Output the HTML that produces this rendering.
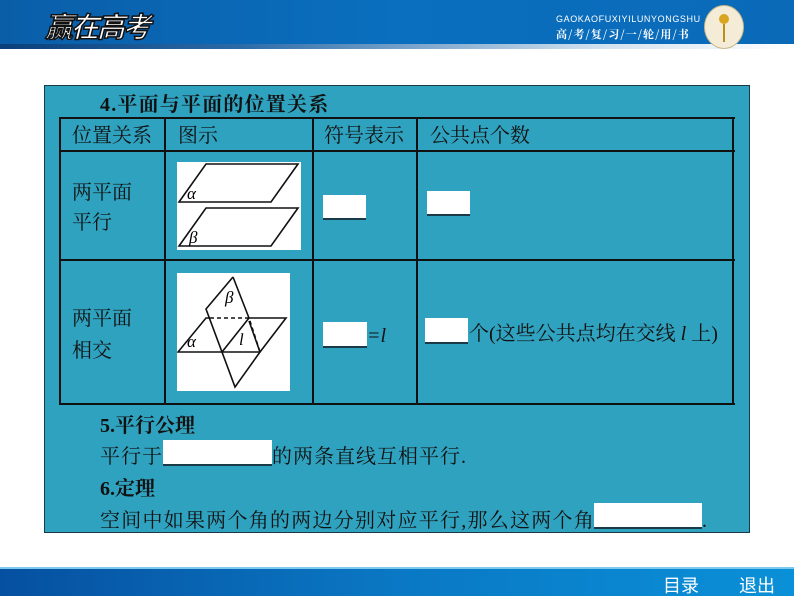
<!DOCTYPE html>
<html><head><meta charset="utf-8"><style>
*{margin:0;padding:0;box-sizing:border-box}
body{width:794px;height:596px;position:relative;background:#fff;overflow:hidden;font-family:"Liberation Serif","Noto Serif CJK SC",serif;color:#111}
.top{position:absolute;left:0;top:0;width:794px;height:44px;background:linear-gradient(90deg,#0a5ea8,#0a6fbf 50%,#0a6ab8)}
.tline{position:absolute;left:0;top:44px;width:794px;height:5px;background:linear-gradient(90deg,#0a3f7a,#2a6aa8 30%,#cfe0ee 75%,#fff)}
.bot{position:absolute;left:0;top:567px;width:794px;height:29px;background:linear-gradient(90deg,#0650a0,#0a78c4 50%,#0a90d8);border-top:2px solid #7cc8ee}
.panel{position:absolute;left:44px;top:85px;width:706px;height:448px;background:#2fa2bf;border:1px solid #1a3a48}
.t{position:absolute;font-size:20px;line-height:20px;white-space:nowrap}
.b{font-weight:bold}
.v{position:absolute;background:#111;width:2px}
.h{position:absolute;background:#111;height:2px}
.blank{position:absolute;background:#fff;border-bottom:2px solid #1a3a48}
</style></head><body>
<div class="top"></div><div class="tline"></div>
<div style="position:absolute;left:45px;top:6px;font:bold italic 28px 'Noto Sans CJK SC',sans-serif;color:#fff;-webkit-text-stroke:1.5px #111;letter-spacing:-2px">赢在高考</div>
<div style="position:absolute;left:556px;top:14px;font:9px 'Liberation Sans',sans-serif;color:#fff;letter-spacing:0.6px">GAOKAOFUXIYILUNYONGSHU</div>
<div style="position:absolute;left:556px;top:26px;font:bold 11px 'Noto Serif CJK SC',serif;color:#fff;letter-spacing:1px">高/考/复/习/一/轮/用/书</div>
<div style="position:absolute;left:704px;top:5px;width:40px;height:44px;border-radius:50%;background:#f4ecd6;border:1px solid #c8b88a"></div>
<div style="position:absolute;left:719px;top:14px;width:10px;height:10px;border-radius:50%;background:#d9a520"></div>
<div style="position:absolute;left:723px;top:24px;width:2px;height:18px;background:#b8901a"></div>
<div class="bot"></div>
<div style="position:absolute;left:663px;top:572px;font:18px 'Noto Sans CJK SC',sans-serif;color:#fff">目录</div>
<div style="position:absolute;left:739px;top:572px;font:18px 'Noto Sans CJK SC',sans-serif;color:#fff">退出</div>
<div class="panel"></div>
<div class="t b" style="left:100px;top:95px;letter-spacing:1.2px">4.平面与平面的位置关系</div>
<div class="h" style="left:59px;top:117px;width:676px"></div>
<div class="h" style="left:59px;top:150px;width:676px"></div>
<div class="h" style="left:59px;top:259px;width:676px"></div>
<div class="h" style="left:59px;top:403px;width:676px"></div>
<div class="v" style="left:59px;top:117px;height:288px"></div>
<div class="v" style="left:164px;top:117px;height:288px"></div>
<div class="v" style="left:312px;top:117px;height:288px"></div>
<div class="v" style="left:416px;top:117px;height:288px"></div>
<div class="v" style="left:732px;top:117px;height:288px"></div>
<div class="t" style="left:72px;top:126px">位置关系</div>
<div class="t" style="left:178px;top:126px">图示</div>
<div class="t" style="left:324px;top:126px">符号表示</div>
<div class="t" style="left:430px;top:126px">公共点个数</div>
<div class="t" style="left:72px;top:183px">两平面</div>
<div class="t" style="left:72px;top:213px">平行</div>
<div class="t" style="left:72px;top:309px">两平面</div>
<div class="t" style="left:72px;top:341px">相交</div>
<svg style="position:absolute;left:177px;top:162px" width="124" height="88">
<rect width="124" height="88" fill="#fff"/>
<g fill="none" stroke="#111" stroke-width="1.6">
<path d="M2 40 L29 2 L121 2 L94 40 Z"/><path d="M2 84 L29 46 L121 46 L94 84 Z"/></g>
<text x="10" y="37" font-size="17" font-style="italic" font-family="Liberation Serif">α</text>
<text x="12" y="81" font-size="17" font-style="italic" font-family="Liberation Serif">β</text>
</svg>
<svg style="position:absolute;left:177px;top:273px" width="113" height="118">
<rect width="113" height="118" fill="#fff"/>
<g fill="none" stroke="#111" stroke-width="1.6">
<path d="M56 4 L29 36 L58 114 L83 79 L72 48"/>
<path d="M72 45 L56 4"/>
<path d="M33 45 L29 45 L1 79 L83 79 M72 45 L109 45 L83 79"/>
<path d="M45 79 L72 45"/>
</g>
<g fill="none" stroke="#111" stroke-width="1.6" stroke-dasharray="4,3"><path d="M33 45 L72 45 L83 79"/></g>
<text x="48" y="30" font-size="17" font-style="italic" font-family="Liberation Serif">β</text>
<text x="10" y="74" font-size="17" font-style="italic" font-family="Liberation Serif">α</text>
<text x="62" y="72" font-size="17" font-style="italic" font-family="Liberation Serif">l</text>
</svg>
<div class="blank" style="left:323px;top:195px;width:43px;height:25px"></div>
<div class="blank" style="left:427px;top:191px;width:43px;height:25px"></div>
<div class="blank" style="left:323px;top:322px;width:44px;height:26px"></div>
<div class="t" style="left:367px;top:326px;font-style:italic">=l</div>
<div class="blank" style="left:425px;top:318px;width:43px;height:26px"></div>
<div class="t" style="left:469px;top:324px">个(这些公共点均在交线 <i>l</i> 上)</div>
<div class="t b" style="left:100px;top:416px">5.平行公理</div>
<div class="t" style="left:100px;top:447px;letter-spacing:1px">平行于</div>
<div class="blank" style="left:163px;top:440px;width:109px;height:26px"></div>
<div class="t" style="left:272px;top:447px;letter-spacing:1px">的两条直线互相平行.</div>
<div class="t b" style="left:100px;top:479px">6.定理</div>
<div class="t" style="left:100px;top:511px;letter-spacing:1.25px">空间中如果两个角的两边分别对应平行,那么这两个角</div>
<div class="blank" style="left:594px;top:503px;width:108px;height:26px"></div>
<div class="t" style="left:702px;top:511px">.</div>
</body></html>
